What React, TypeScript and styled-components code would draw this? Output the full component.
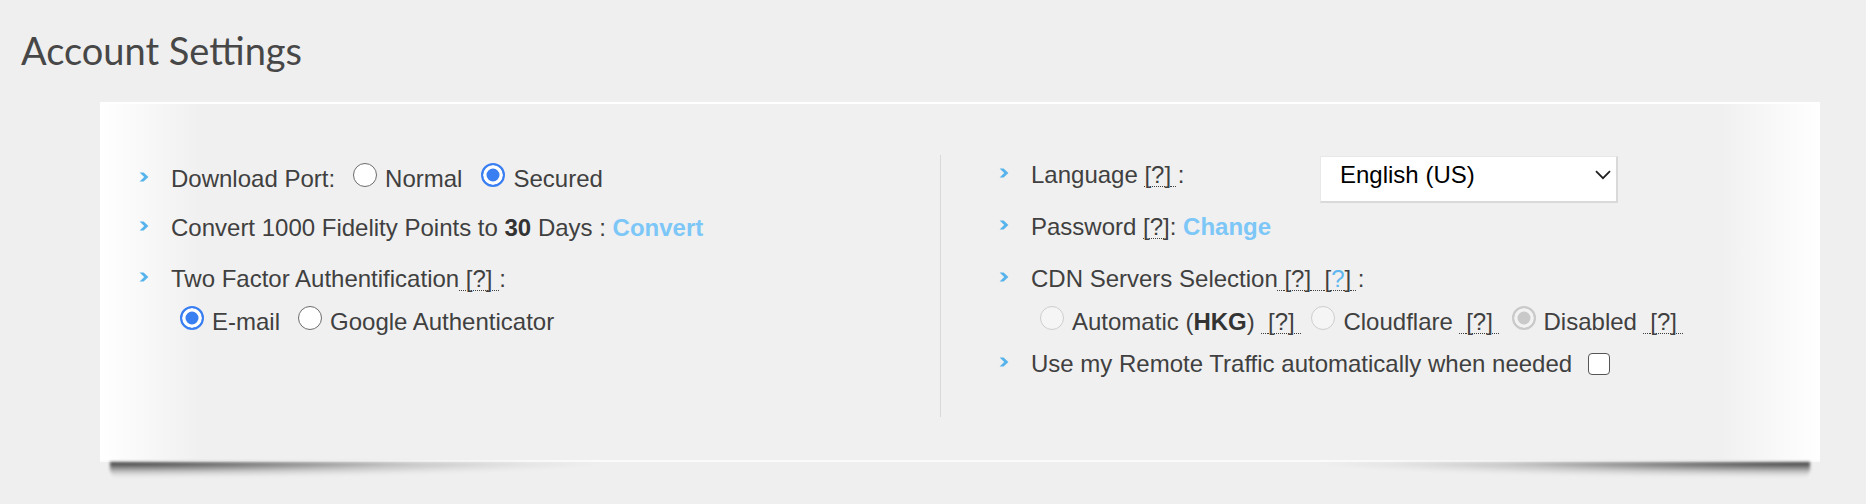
import React from "react";
import styled, { createGlobalStyle } from "styled-components";

const GlobalStyle = createGlobalStyle`
  html {
    margin: 0;
    padding: 0;
    background: #efefef;
  }
  body {
    margin: 0;
    padding: 0;
    font-family: "Liberation Sans", Arial, sans-serif;
    color: #404040;
  }
`;

const Page = styled.div`
  width: 1866px;
  min-height: 504px;
  box-sizing: border-box;
  padding: 31px 0 42px;
`;

const Title = styled.h1`
  margin: 0 0 33px 21px;
  height: 38px;
  font-family: Lato, "Liberation Sans", sans-serif;
  font-weight: 400;
  font-size: 38px;
  line-height: 38px;
  color: #474747;
`;

const PanelShell = styled.div`
  position: relative;
  margin-left: 100px;
  width: 1720px;
`;

const LiftShadow = styled.span<{ $side: "left" | "right" }>`
  position: absolute;
  top: 100%;
  ${(p) => (p.$side === "left" ? "left: 10px;" : "right: 10px;")}
  width: 620px;
  height: 20px;
  background: radial-gradient(
    ellipse 100% 100% at ${(p) => (p.$side === "left" ? "0% 0%" : "100% 0%")},
    rgba(0, 0, 0, 0.78) 0%,
    rgba(0, 0, 0, 0.5) 22%,
    rgba(0, 0, 0, 0.16) 50%,
    rgba(0, 0, 0, 0.04) 68%,
    rgba(0, 0, 0, 0) 80%
  );
  border-radius: ${(p) => (p.$side === "left" ? "0 0 0 14px" : "0 0 14px 0")};
  filter: blur(1.5px);
  pointer-events: none;
`;

const Panel = styled.section`
  position: relative;
  height: 360px;
  box-sizing: border-box;
  border-top: 2px solid #ffffff;
  border-bottom: 2px solid #fbfbfb;
  background: linear-gradient(
    to right,
    #ffffff 0,
    #f0f0f0 100px,
    #f0f0f0 calc(100% - 100px),
    #ffffff 100%
  );
  display: grid;
  grid-template-columns: 840px 1px 1fr;
`;

const Column = styled.div<{ $pt: number; $pl: number }>`
  padding-top: ${(p) => p.$pt}px;
  padding-left: ${(p) => p.$pl}px;
`;

const Divider = styled.div`
  margin-top: 51px;
  height: 262px;
  background: #d9d9d9;
`;

const Row = styled.div<{ $mt?: number }>`
  display: flex;
  align-items: flex-start;
  height: 30px;
  margin-top: ${(p) => p.$mt ?? 0}px;
  font-size: 24px;
  line-height: 30px;
  white-space: nowrap;
`;

const ArrowBox = styled.svg`
  flex: none;
  width: 10px;
  height: 10px;
  margin: 8px 22px 0 0;
`;

const SubRow = styled(Row)`
  padding-left: 32px;
`;

const Content = styled.div`
  display: block;
`;

const FlexContent = styled.div`
  display: flex;
  align-items: flex-start;
`;

const LabelCell = styled.span<{ $w: number }>`
  display: inline-block;
  width: ${(p) => p.$w}px;
  flex: none;
`;

const Option = styled.label`
  display: inline;
  cursor: pointer;
`;

const Radio = styled.input.attrs({ type: "radio" })<{ $ml?: number }>`
  appearance: none;
  -webkit-appearance: none;
  box-sizing: border-box;
  width: 24px;
  height: 24px;
  margin: -1px 8px 0 ${(p) => p.$ml ?? 0}px;
  vertical-align: top;
  border-radius: 50%;
  border: 1.5px solid #6b6b6b;
  background: #ffffff;

  &:checked {
    border: 2.5px solid #3a7ff2;
    background: #3a7ff2;
    box-shadow: inset 0 0 0 3.5px #ffffff;
  }
  &:disabled {
    border: 1.5px solid #cdcdcd;
    background: #f5f5f5;
  }
  &:disabled:checked {
    border: 2.5px solid #c9c9c9;
    background: #c9c9c9;
    box-shadow: inset 0 0 0 3.5px #f2f2f2;
  }
`;

const Checkbox = styled.input.attrs({ type: "checkbox" })`
  appearance: none;
  -webkit-appearance: none;
  box-sizing: border-box;
  width: 22px;
  height: 22px;
  margin: 4px 0 0 16px;
  vertical-align: top;
  border: 1.5px solid #555555;
  border-radius: 4px;
  background: #ffffff;
`;

const Hint = styled.abbr`
  text-decoration: underline dotted;
  text-decoration-thickness: 1px;
  text-underline-offset: 3px;
  cursor: help;
`;

const BlueQ = styled.span`
  color: #5db6ee;
`;

const Strong = styled.b`
  font-weight: 700;
  color: #333333;
`;

const Action = styled.a`
  color: #7cc7f7;
  font-weight: 700;
  text-decoration: none;
  cursor: pointer;
`;

const SelectWrap = styled.div`
  position: relative;
  flex: none;
  width: 298px;
  height: 47px;
  margin-top: -4px;
`;

const Select = styled.select`
  appearance: none;
  -webkit-appearance: none;
  box-sizing: border-box;
  width: 100%;
  height: 100%;
  margin: 0;
  padding: 0 30px 10px 19px;
  border: 1px solid #e8e8e8;
  border-right: 2px solid #d9d9d9;
  border-bottom: 2px solid #d9d9d9;
  border-radius: 0;
  background: #ffffff;
  color: #000000;
  font-family: "Liberation Sans", Arial, sans-serif;
  font-size: 24px;
  outline: none;
`;

const Chevron = styled.svg`
  position: absolute;
  right: 7px;
  top: 14px;
  width: 16px;
  height: 10px;
  pointer-events: none;
`;

const Arrow = () => (
  <ArrowBox viewBox="0 0 10 10">
    <polygon points="0.6,0.4 4.6,0.4 9.4,5 4.6,9.6 0.6,9.6 5.2,5" fill="#56b3eb" />
  </ArrowBox>
);

const Q = ({ lead = true, trail = true, title }: { lead?: boolean; trail?: boolean; title: string }) => (
  <Hint title={title}>
    {lead ? "\u00a0" : ""}[?]{trail ? "\u00a0" : ""}
  </Hint>
);

export default function App() {
  return (
    <>
      <GlobalStyle />
      <Page>
        <Title>Account Settings</Title>
        <PanelShell>
          <Panel>
            <Column $pt={60} $pl={39}>
              <Row>
                <Arrow />
                <Content>
                  Download Port:
                  <Option>
                    <Radio name="port" $ml={18} />
                    Normal
                  </Option>
                  <Option>
                    <Radio name="port" $ml={19} defaultChecked />
                    Secured
                  </Option>
                </Content>
              </Row>
              <Row $mt={19}>
                <Arrow />
                <Content>
                  Convert 1000 Fidelity Points to <Strong>30</Strong> Days :{" "}
                  <Action>Convert</Action>
                </Content>
              </Row>
              <Row $mt={21}>
                <Arrow />
                <Content>
                  Two Factor Authentification
                  <Q title="Two Factor Authentification" />:
                </Content>
              </Row>
              <SubRow $mt={13}>
                <Content>
                  <Option>
                    <Radio name="tfa" $ml={9} defaultChecked />
                    E-mail
                  </Option>
                  <Option>
                    <Radio name="tfa" $ml={18} />
                    Google Authenticator
                  </Option>
                </Content>
              </SubRow>
            </Column>

            <Divider />

            <Column $pt={56} $pl={58}>
              <Row>
                <Arrow />
                <FlexContent>
                  <LabelCell $w={289}>
                    Language <Q lead={false} title="Language" />:
                  </LabelCell>
                  <SelectWrap>
                    <Select defaultValue="en">
                      <option value="en">English (US)</option>
                      <option value="fr">Français</option>
                      <option value="de">Deutsch</option>
                    </Select>
                    <Chevron viewBox="0 0 16 10">
                      <polyline
                        points="1,1.2 8,8.2 15,1.2"
                        fill="none"
                        stroke="#1e1e1e"
                        strokeWidth="1.7"
                      />
                    </Chevron>
                  </SelectWrap>
                </FlexContent>
              </Row>
              <Row $mt={22}>
                <Arrow />
                <Content>
                  Password <Q lead={false} trail={false} title="Password" />:{" "}
                  <Action>Change</Action>
                </Content>
              </Row>
              <Row $mt={22}>
                <Arrow />
                <Content>
                  CDN Servers Selection
                  <Q title="CDN Servers Selection" />
                  <Hint title="CDN Servers">
                    {"\u00a0"}[<BlueQ>?</BlueQ>]{"\u00a0"}
                  </Hint>
                  :
                </Content>
              </Row>
              <SubRow $mt={13}>
                <Content>
                  <Option>
                    <Radio name="cdn" $ml={9} disabled />
                    Automatic (<Strong>HKG</Strong>) <Q title="Automatic" />
                  </Option>
                  <Option>
                    <Radio name="cdn" $ml={10} disabled />
                    Cloudflare <Q title="Cloudflare" />
                  </Option>
                  <Option>
                    <Radio name="cdn" $ml={12} disabled defaultChecked />
                    Disabled <Q title="Disabled" />
                  </Option>
                </Content>
              </SubRow>
              <Row $mt={12}>
                <Arrow />
                <Content>
                  Use my Remote Traffic automatically when needed
                  <Checkbox />
                </Content>
              </Row>
            </Column>
          </Panel>
          <LiftShadow $side="left" />
          <LiftShadow $side="right" />
        </PanelShell>
      </Page>
    </>
  );
}
